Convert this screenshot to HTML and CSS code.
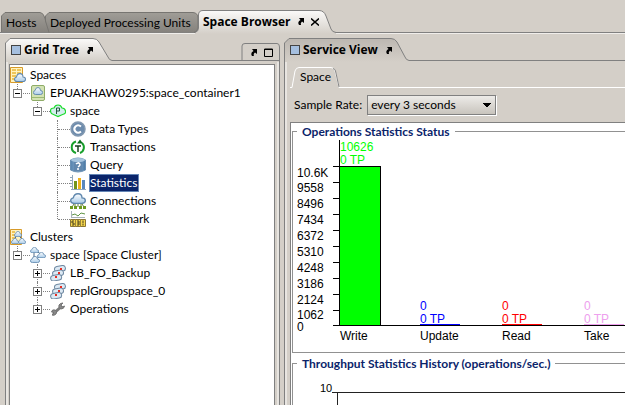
FILE: index.html
```html
<!DOCTYPE html>
<html lang="en">
<head>
<meta charset="utf-8">
<title>Space Browser</title>
<link rel="stylesheet" href="styles.css">
</head>
<body>
<svg class="defs" aria-hidden="true">
  <defs>
    <linearGradient id="dark" x2="0" y2="1"><stop offset="0" stop-color="#a09d97"/><stop offset="1" stop-color="#85827d"/></linearGradient>
    <linearGradient id="light" x2="0" y2="1"><stop offset="0" stop-color="#fbfaf9"/><stop offset="1" stop-color="#d4cfc8"/></linearGradient>
    <linearGradient id="dim" x2="0" y2="1"><stop offset="0" stop-color="#bcb7b1"/><stop offset="1" stop-color="#d4cfc8"/></linearGradient>
    <linearGradient id="cloudfill" x2="0" y2="1"><stop offset="0" stop-color="#fff"/><stop offset="1" stop-color="#a9cbe8"/></linearGradient>
    <linearGradient id="db"><stop offset="0" stop-color="#5683ad"/><stop offset=".5" stop-color="#83a9cc"/><stop offset="1" stop-color="#4a78a3"/></linearGradient>
    <symbol id="arrow" viewBox="0 0 8 9"><path d="M2 1h5v5L5 4.500Q3 6 4 8H2Q0 5 3.500 3z"/></symbol>
    <symbol id="cloud" viewBox="0 0 12 8" preserveAspectRatio="none"><path d="M3 7.500Q.5 7.500.5 5.500.5 4 2.500 3.500 3 .5 6 .5T9 3.500q2.500 0 2.500 2t-2.500 2z" fill="url(#cloudfill)" stroke="#5f87ad"/></symbol>
    <symbol id="group" viewBox="0 0 16 16"><g fill="#dce9f4" stroke="#6d87a0"><rect x="4.500" y="1" width="11" height="5.500" rx="2.700" transform="rotate(-10 10 4)"/><rect x="2.500" y="5.500" width="11" height="5.500" rx="2.700" transform="rotate(-10 8 8)"/><rect x=".5" y="10" width="11" height="5.500" rx="2.700" transform="rotate(-10 6 12)"/></g><path d="M10 3h2v2h-2zM8 7h2v2H8zM5 11h2v2H5z" fill="#e62d22"/></symbol>
  </defs>
</svg>
<div class="app">
  <nav class="top-tabs">
    <button class="tab hosts"><svg class="shape" aria-hidden="true"><path d="M.5 20V4L4 .5H39Q42 1 43 4L47 15Q49 19 53 20.500" fill="url(#dark)" stroke="#777571"/></svg><span>Hosts</span></button>
    <button class="tab deployed"><svg class="shape" aria-hidden="true"><path d="M4 20.500L.5 9V4L4 .5H148Q153 1 153 6V16Q153 19 149 20.500" fill="url(#dark)" stroke="#777571"/></svg><span>Deployed Processing Units</span></button>
    <button class="tab browser"><svg class="shape" aria-hidden="true"><path d="M-3 22.500Q.5 21.500.5 18V5Q.5 .5 5 .5H121Q126 .5 128 6L133 19Q134 22 138 22.500V24H-3z" fill="url(#light)"/><path d="M-3 22.500Q.5 21.500.5 18V5Q.5 .5 5 .5H121Q126 .5 128 6L133 19Q134 22 138 22.500" fill="none" stroke="#808080"/></svg><b>Space Browser</b><svg class="arrow" aria-hidden="true"><use href="#arrow"/></svg><svg class="close" viewBox="0 0 8 8" aria-hidden="true"><path d="M0 .5L8 7.500M8 .5L0 7.500" stroke="#000" stroke-width="1.500"/></svg></button>
  </nav>
  <main class="panels">
    <section class="panel tree-panel">
      <header class="panel-head">
        <svg class="shape" aria-hidden="true"><path d="M.5 24V5L5 .5H88Q92 .5 94 4L103 19Q104 22 107 22.500V24z" fill="url(#light)"/><path d="M.5 24V5L5 .5H88Q92 .5 94 4L103 19Q104 22 107 22.500H237V8Q237 5.500 240 5.500H272Q274.500 5.500 274.500 9V24M237 22.500H274" fill="none" stroke="#808080"/></svg>
        <i class="square"></i><b>Grid Tree</b><svg class="arrow" aria-hidden="true"><use href="#arrow"/></svg>
        <div class="tools"><svg class="arrow" aria-hidden="true"><use href="#arrow"/></svg><svg class="max" viewBox="0 0 9 9" aria-hidden="true"><path d="M.5 1H8.500V8.500H.5zM0 1.500H9" fill="none" stroke="#000"/></svg></div>
      </header>
      <div class="tree-frame">
        <ul class="tree">
          <li><div class="row"><svg class="icon" viewBox="0 0 16 16"><path d="M.5.500h12v15H.500z" fill="#fff3bf" stroke="#d79a29"/><path d="M2 3h4M7 3h4M2 6h4M7 6h4M2 9h4M2 12h4" stroke="#e9b637" stroke-width="1.500"/><use href="#cloud" x="4" y="6" width="12" height="9"/></svg><span>Spaces</span></div>
            <ul>
              <li><div class="row"><i class="expander"></i><svg class="icon" viewBox="0 0 16 16"><rect x="1.500" y=".5" width="13" height="15" rx="1.500" fill="#d3e3b4" stroke="#8fac68"/><path d="M2 12.500h12" stroke="#9cba73"/><use href="#cloud" x="3" y="2" width="10" height="8"/></svg><span>EPUAKHAW0295:space_container1</span></div>
                <ul>
                  <li><div class="row"><i class="expander"></i><svg class="icon" viewBox="0 0 16 16"><path d="M3.500 11.500Q.5 11 .5 8T4 5Q5 2 8 2t4 3q3 0 3.500 3t-3 3.500L8 13.500z" fill="#d4eeee" stroke="#1bdc2c" stroke-width="1.200"/><path d="M6.500 11V5h3v3h-3" fill="none" stroke="#22583c"/></svg><span>space</span></div>
                    <ul>
                      <li><div class="row"><svg class="icon" viewBox="0 0 16 16"><circle cx="8" cy="8" r="7" fill="#6d8cad" stroke="#8298b0" stroke-width="1.500"/><path d="M11 5.500Q8 3 5.500 5.500T5.500 10.500Q8 13 11 10.500" fill="none" stroke="#fff" stroke-width="2"/></svg><span>Data Types</span></div></li>
                      <li><div class="row"><svg class="icon" viewBox="0 0 16 16"><path d="M6 2.500A6 6 0 0 0 6 14M10 14A6 6 0 0 0 12 4" fill="none" stroke="#17a02b" stroke-width="2"/><path d="M13 4.500H7L10 .5z" fill="#08701a"/><path d="M5 7h6M8 7v6" stroke="#173f1f" stroke-width="1.500"/></svg><span>Transactions</span></div></li>
                      <li><div class="row"><svg class="icon" viewBox="0 0 16 16"><path d="M.5 3Q8-1 15.500 3v10Q8 17 .5 13z" fill="url(#db)" stroke="#6a90b4"/><ellipse cx="8" cy="3" rx="7" ry="2" fill="#a6c4de"/><path d="M4 5h8v9H4z" fill="#6187ad"/><path d="M6 7Q8 5 9.500 6.500T8 10M8 11v2" fill="none" stroke="#fff" stroke-width="1.500"/></svg><span>Query</span></div></li>
                      <li><div class="row selected"><svg class="icon" viewBox="0 0 16 16"><path d="M2.500 0v14M1 14.500h15M0 2.500h2M0 5.500h2M0 8.500h2M0 11.500h2" stroke="#92a8bd"/><path d="M4 6h3v8H4z" fill="#71941c"/><path d="M8 3h3v11H8z" fill="#edb21d"/><path d="M12 5h3v9h-3z" fill="#5988be"/></svg><span>Statistics</span></div></li>
                      <li><div class="row"><svg class="icon" viewBox="0 0 16 16"><path d="M8 9v5M4 9v2l-2 3M12 9v2l2 3M5 11v3M11 11v3" stroke="#657e3c" fill="none"/><use href="#cloud" x="0" y="0" width="16" height="11"/><path d="M0 13h3v3H0zM4 13h3v3H4zM9 13h3v3H9zM13 13h3v3h-3z" fill="#6b9a20"/></svg><span>Connections</span></div></li>
                      <li><div class="row"><svg class="icon" viewBox="0 0 16 16"><path d="M1.500 0v7M1 6.500h14" stroke="#a8b2bb"/><path d="M2 4l3-1 3 2 3-3 4 1" fill="none" stroke="#5e9445"/><path d="M.5 8.500h15v7H.500z" fill="#f5d64c" stroke="#8b7635"/><path d="M4 10H2v2h2v2H2M7 10h2v4H7M7 12h2M13 9.500v3M13 13v1.500" fill="none" stroke="#4b421f"/><path d="M5.500 8v8M10.500 8v8" stroke="#9b853b"/></svg><span>Benchmark</span></div></li>
                    </ul>
                  </li>
                </ul>
              </li>
            </ul>
          </li>
          <li><div class="row"><svg class="icon" viewBox="0 0 16 16"><path d="M.5.500h11v15H.500z" fill="#fff3bf" stroke="#d79a29"/><path d="M2 3h3M2 6h3M2 9h3M2 12h3" stroke="#e9b637" stroke-width="1.500"/><path d="M7 6l-3 5M8 6l5 5" stroke="#526d87"/><use href="#cloud" x="4" y="2" width="8" height="6"/><use href="#cloud" x="1" y="9" width="8" height="6"/><use href="#cloud" x="8" y="9" width="8" height="6"/></svg><span>Clusters</span></div>
            <ul>
              <li><div class="row"><i class="expander"></i><svg class="icon" viewBox="0 0 16 16"><path d="M5 3l7 5-6 4M4 4v7" fill="none" stroke="#526d87"/><use href="#cloud" x="0" y="0" width="9" height="6"/><use href="#cloud" x="7" y="5" width="9" height="6"/><use href="#cloud" x="0" y="9" width="10" height="7"/></svg><span>space [Space Cluster]</span></div>
                <ul>
                  <li><div class="row"><i class="expander closed"></i><svg class="icon"><use href="#group"/></svg><span>LB_FO_Backup</span></div></li>
                  <li><div class="row"><i class="expander closed"></i><svg class="icon"><use href="#group"/></svg><span>replGroupspace_0</span></div></li>
                  <li><div class="row"><i class="expander closed"></i><svg class="icon" viewBox="0 0 16 16"><path d="M3 13L12 5" stroke="#7b7b7b" stroke-width="3"/><path d="M14.500 5Q14 8 11 8 8 7 9 4q1-2 4-2l-2 2 1 2zM1.500 11Q2 8 5 9q3 1 1 4-2 2-4 1l2-2-1-1z" fill="#888" stroke="#747474"/></svg><span>Operations</span></div></li>
                </ul>
              </li>
            </ul>
          </li>
        </ul>
      </div>
    </section>
    <section class="panel service-panel">
      <header class="panel-head">
        <svg class="shape" aria-hidden="true"><path d="M.5 24V5L5 .5H107Q111 .5 113 4L121 19Q122 22 125 22.500V24z" fill="url(#dim)"/><path d="M.5 24V5L5 .5H107Q111 .5 113 4L121 19Q122 22 125 22.500H4000" fill="none" stroke="#808080"/></svg>
        <i class="square"></i><b>Service View</b><svg class="arrow" aria-hidden="true"><use href="#arrow"/></svg>
      </header>
      <div class="service">
        <div class="sub-tabs"><svg class="shape" aria-hidden="true"><path d="M0 20.500H2L5 4Q6 .5 9 .5H41Q44 .5 45 4L49 20.500H4000" fill="none" stroke="#fff"/><path d="M43 1.500Q45 2 45.500 4L49 20" fill="none" stroke="#858585"/></svg><button class="sub-tab">Space</button></div>
        <div class="rate"><label for="rate">Sample Rate:</label><select id="rate"><option>every 3 seconds</option></select></div>
        <div class="charts">
          <fieldset class="stats">
            <legend>Operations Statistics Status</legend>
            <svg class="bars" role="img" aria-label="Operations by type">
              <path d="M47 26h41v160H47z"/>
              <path d="M47 27h40v158H47z" fill="#0f0"/>
              <path d="M46 0h1v186h-1zM40 185h4000v1H40z"/>
              <path d="M40 26.500h6M40 42.500h6M40 58.500h6M40 74.500h6M40 90.500h6M40 106.500h6M40 122.500h6M40 138.500h6M40 154.500h6M40 170.500h6" stroke="#000"/>
              <g><text x="4" y="37">10.6K</text><text x="4" y="52">9558</text><text x="4" y="68">8496</text><text x="4" y="84">7434</text><text x="4" y="100">6372</text><text x="4" y="116">5310</text><text x="4" y="132">4248</text><text x="4" y="148">3186</text><text x="4" y="164">2124</text><text x="4" y="179">1062</text><text x="4" y="191">0</text></g>
              <g fill="#0f0"><text x="47" y="11">10626</text><text x="47" y="24">0 TP</text></g>
              <g fill="#00f"><text x="127" y="170">0</text><text x="127" y="183">0 TP</text><path d="M127 184h40v1h-40z"/></g>
              <g fill="#f00"><text x="209" y="170">0</text><text x="209" y="183">0 TP</text><path d="M209 184h40v1h-40z"/></g>
              <g fill="#eea0ee"><text x="291" y="170">0</text><text x="291" y="183">0 TP</text><path d="M291 184h40v1h-40z"/></g>
              <g><text x="47" y="200">Write</text><text x="127" y="200">Update</text><text x="209" y="200">Read</text><text x="291" y="200">Take</text></g>
            </svg>
          </fieldset>
          <fieldset class="stats history">
            <legend>Throughput Statistics History (operations/sec.)</legend>
            <svg class="plot" role="img" aria-label="Throughput history"><text x="27" y="20">10</text><path d="M39 20.500H4000M44.500 21V400" stroke="#222"/></svg>
          </fieldset>
        </div>
      </div>
    </section>
  </main>
</div>
</body>
</html>
```
FILE: styles.css
```css
* { box-sizing: border-box; }
body { margin: 0; background: #d4cfc8; color: #000; font: 12px/18px Lato, "Open Sans", sans-serif; }
button { font: inherit; color: inherit; background: none; border: 0; padding: 0; }
b { font-family: "Open Sans", sans-serif; }
ul { list-style: none; margin: 0; padding: 0; }
.defs { position: absolute; width: 0; height: 0; }
.app { height: 100vh; overflow: hidden; display: flex; flex-direction: column; }
.shape { position: absolute; left: 0; top: 0; width: 100%; height: 100%; overflow: visible; z-index: -1; }
.arrow { width: 8px; height: 9px; flex: none; }
.close { width: 8px; height: 8px; flex: none; }

.top-tabs { display: flex; align-items: flex-end; height: 34px; flex: none; padding-left: 1px; border-bottom: 1px solid #f0eeeb; box-shadow: inset 0 -1px #808080; }
.tab { position: relative; z-index: 0; display: flex; align-items: center; height: 21px; padding-left: 5px; white-space: nowrap; }
.hosts { width: 44px; }
.deployed { width: 153px; }
.browser { height: 23px; width: 136px; z-index: 1; gap: 6px; }

.panels { flex: 1; min-height: 0; display: grid; grid-template-columns: 275px minmax(0, 1fr); gap: 4px; padding: 4px 0 0 5px; }
.panel { display: flex; flex-direction: column; min-width: 0; min-height: 0; }
.panel-head { position: relative; z-index: 0; display: flex; align-items: center; height: 24px; flex: none; padding-left: 7px; overflow: hidden; }
.square { width: 8px; height: 8px; flex: none; background: #a5bfdf; outline: 1px solid #444; margin-right: 4px; }
.panel-head b { margin-right: 7px; white-space: nowrap; }
.tools { margin-left: auto; padding: 4px 7px 0 0; display: flex; align-items: center; gap: 6px; }
.max { width: 9px; height: 9px; }

.tree-frame { flex: 1; min-height: 0; border: solid #808080; border-width: 0 1px; padding: 2px 4px 0 3px; box-shadow: inset 2px 0 #e8e5e1, inset -2px 0 #e8e5e1; }
.tree { height: 100%; background: #fff; border: 1px solid #808080; border-bottom: 0; padding-top: 1px; }
.row { display: flex; align-items: center; height: 18px; gap: 4px; white-space: nowrap; }
.icon { width: 16px; height: 16px; flex: none; }
li { position: relative; }
li li .row { padding-left: 20px; }
li li li { margin-left: 20px; }
li li::before { content: ""; position: absolute; left: 7px; top: 0; height: 100%; border-left: 1px dotted #808080; }
li li:last-child::before { height: 9px; }
li li::after { content: ""; position: absolute; left: 8px; top: 9px; width: 12px; border-top: 1px dotted #808080; }
.expander { position: absolute; z-index: 1; left: 3px; top: 5px; width: 9px; height: 9px; border: 1px solid #808080; background: linear-gradient(#000, #000) center / 5px 1px no-repeat, #fff; }
.closed { background: linear-gradient(#000, #000) center / 5px 1px no-repeat, linear-gradient(#000, #000) center / 1px 5px no-repeat, #fff; }
.selected span { background: #0a246a; color: #fff; outline: 1px solid #6485b5; outline-offset: -1px; padding: 0 2px 0 1px; margin-left: -1px; }

.service { flex: 1; min-height: 0; display: flex; flex-direction: column; border-left: 1px solid #808080; box-shadow: inset 2px 0 #e8e5e1; padding-left: 5px; }
.sub-tabs { position: relative; z-index: 0; height: 21px; margin-top: 5px; padding-left: 10px; flex: none; }
.sub-tab { height: 20px; }
.rate { display: flex; align-items: center; gap: 5px; height: 34px; padding-left: 4px; flex: none; }
.rate select { font: inherit; height: 20px; width: 129px; padding: 0 0 0 3px; border: 1px solid #808080; border-radius: 0; box-shadow: 1px 1px #fff; appearance: none; background: linear-gradient(45deg, transparent 50%, #000 50%) right 8px center / 4px 4px no-repeat, linear-gradient(-45deg, transparent 50%, #000 50%) right 4px center / 4px 4px no-repeat, linear-gradient(#edebe8, #c8c4bd); }
.charts { flex: 1; min-height: 0; overflow: hidden; background: #fff; border: solid #808080; border-width: 1px 0 0 1px; padding-left: 1px; }
.stats { margin: 0; min-width: 0; padding: 0; border: 1px solid #919191; border-right: 0; }
legend { margin-left: 4px; padding: 0 5px; color: #0a246a; font-weight: bold; line-height: 17px; }
.bars, .plot { display: block; width: 100%; overflow: hidden; font: 12px "Liberation Sans", Arial, sans-serif; }
.bars { height: 212px; }
.plot { height: 60px; font-size: 11px; }
.history { margin-top: 2px; }
```
